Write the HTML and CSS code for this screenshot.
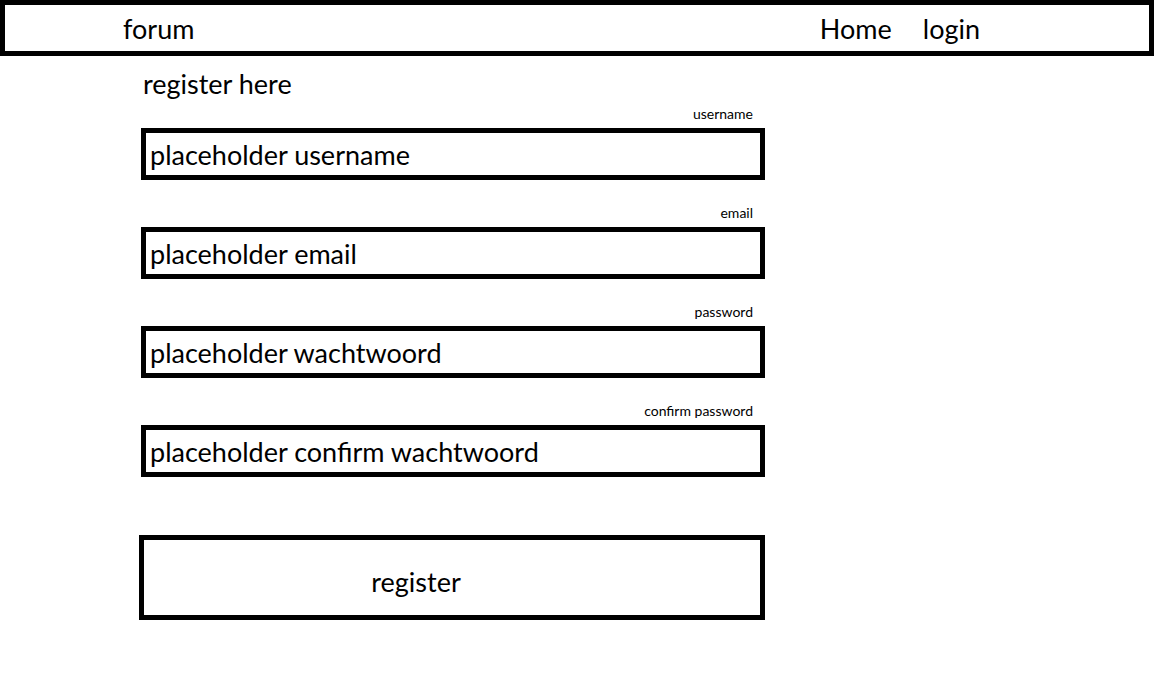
FILE: index.html
```html
<!DOCTYPE html>
<html lang="en">
<head>
    <meta charset="UTF-8">
    <meta name="viewport" content="width=device-width, initial-scale=1.0">
    <title>forum - register</title>
    <link rel="stylesheet" href="styles.css">
</head>
<body>
    <div class="header">
        <a href="#" class="brand">forum</a>
        <div class="nav-links">
            <a href="#">Home</a>
            <a href="#">login</a>
        </div>
    </div>

    <div class="main-container">
        <h1 class="page-title">register here</h1>

        <form class="register-form" onsubmit="return false">
            <div class="field">
                <label for="username">username</label>
                <input type="text" id="username" placeholder="placeholder username">
            </div>

            <div class="field">
                <label for="email">email</label>
                <input type="email" id="email" placeholder="placeholder email">
            </div>

            <div class="field">
                <label for="password">password</label>
                <input type="password" id="password" placeholder="placeholder wachtwoord">
            </div>

            <div class="field">
                <label for="confirm">confirm password</label>
                <input type="password" id="confirm" placeholder="placeholder confirm wachtwoord">
            </div>

            <button type="submit" class="register-btn">register</button>
        </form>
    </div>
</body>
</html>
```

FILE: styles.css
```css
* {
    margin: 0;
    padding: 0;
    box-sizing: border-box;
}

body {
    font-family: Lato, "Liberation Sans", sans-serif;
    background: white;
    color: #000;
}

a {
    color: #000;
    text-decoration: none;
}

.header {
    display: flex;
    align-items: center;
    height: 56px;
    border: 5px solid #000;
    padding: 2px 169px 0 118px;
    font-size: 27px;
    line-height: 1.2;
}

.nav-links {
    display: flex;
    gap: 31px;
    margin-left: auto;
}

.main-container {
    width: 624px;
    margin-left: 141px;
}

.page-title {
    font-size: 27px;
    font-weight: normal;
    line-height: 1.2;
    margin-top: 12px;
    margin-left: 2px;
}

.register-form {
    display: flex;
    flex-direction: column;
    margin-top: 5px;
}

.field {
    display: flex;
    flex-direction: column;
    margin-bottom: 24px;
}

.field label {
    align-self: flex-end;
    font-size: 14px;
    line-height: 17px;
    margin-bottom: 6px;
    padding-right: 12px;
}

.field input {
    height: 52px;
    border: 5px solid #000;
    padding: 0 4px;
    font-family: inherit;
    font-size: 27px;
    color: #000;
    outline: none;
}

.field input::placeholder {
    color: #000;
    opacity: 1;
}

.register-btn {
    margin-top: 34px;
    margin-left: -2px;
    height: 85px;
    border: 5px solid #000;
    background: white;
    font-family: inherit;
    font-size: 27px;
    padding: 8px 72px 0 0;
    cursor: pointer;
}
```
